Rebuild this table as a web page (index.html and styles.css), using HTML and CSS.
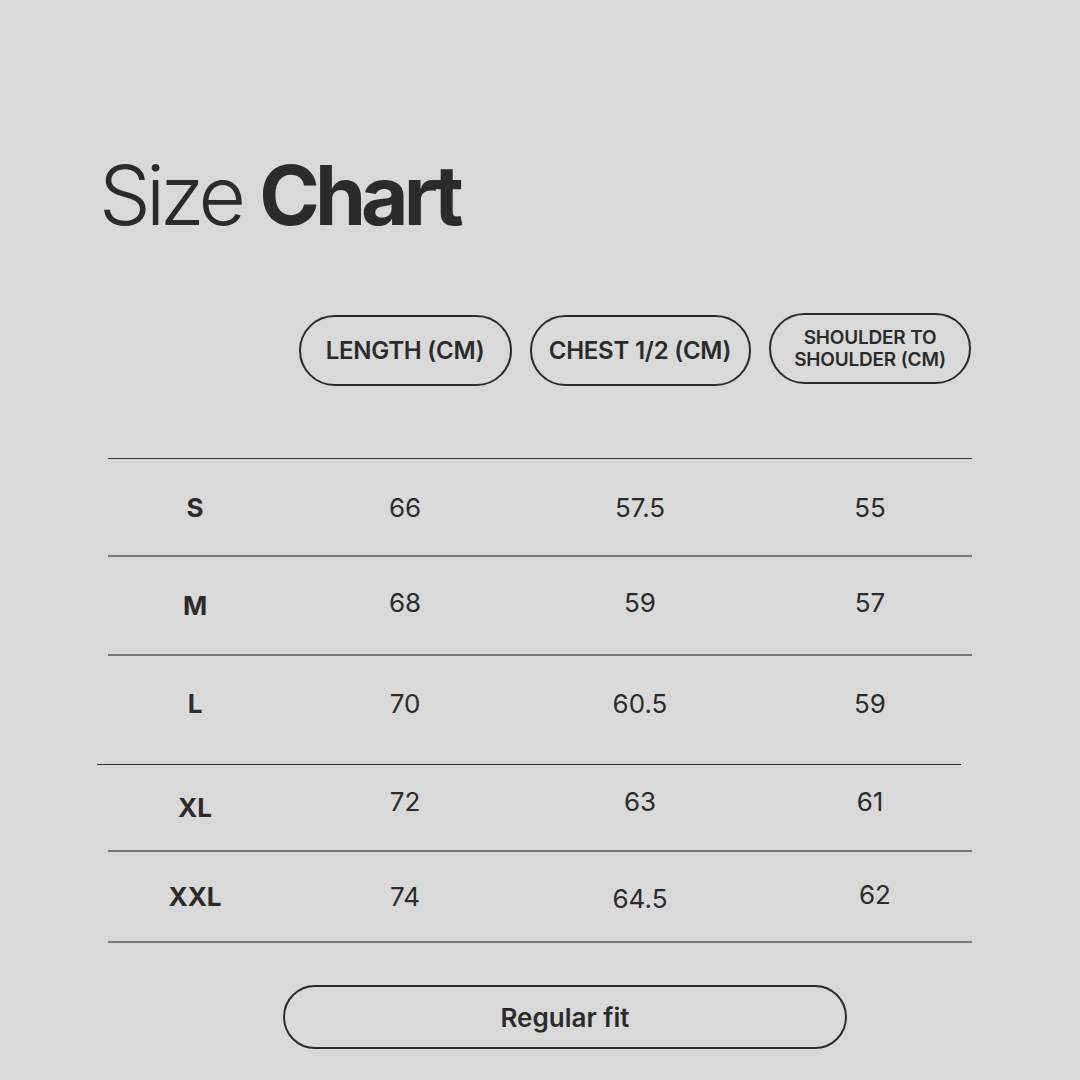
FILE: index.html
```html
<!DOCTYPE html>
<html lang="en">
<head>
<meta charset="utf-8">
<title>Size Chart</title>
<link rel="stylesheet" href="styles.css">
</head>
<body>
<main class="page">
  <h1 class="title"><span class="light">Size</span> <span class="bold">Chart</span></h1>

  <section class="chart">
    <div class="grid head">
      <div class="cell"></div>
      <div class="cell"><div class="pill p-length">LENGTH (CM)</div></div>
      <div class="cell"><div class="pill p-chest">CHEST 1/2 (CM)</div></div>
      <div class="cell c4"><div class="pill p-shoulder">SHOULDER TO<br>SHOULDER (CM)</div></div>
    </div>

    <div class="rule dark"></div>
    <div class="grid row r1">
      <div class="cell size">S</div>
      <div class="cell val">66</div>
      <div class="cell val">57.5</div>
      <div class="cell val c4">55</div>
    </div>
    <div class="rule grey"></div>
    <div class="grid row r2">
      <div class="cell size">M</div>
      <div class="cell val up3">68</div>
      <div class="cell val up3">59</div>
      <div class="cell val c4 up3">57</div>
    </div>
    <div class="rule grey"></div>
    <div class="grid row r3">
      <div class="cell size">L</div>
      <div class="cell val">70</div>
      <div class="cell val">60.5</div>
      <div class="cell val c4">59</div>
    </div>
    <div class="rule dark shift"></div>
    <div class="grid row r4">
      <div class="cell size">XL</div>
      <div class="cell val up6">72</div>
      <div class="cell val up6">63</div>
      <div class="cell val c4 up6">61</div>
    </div>
    <div class="rule grey"></div>
    <div class="grid row r5">
      <div class="cell size">XXL</div>
      <div class="cell val">74</div>
      <div class="cell val down2">64.5</div>
      <div class="cell val c4 nudge">62</div>
    </div>
    <div class="rule grey"></div>
  </section>

  <div class="fit-wrap">
    <div class="fit">Regular fit</div>
  </div>
</main>
</body>
</html>
```

FILE: styles.css
```css
* { box-sizing: border-box; margin: 0; padding: 0; }

html, body {
  width: 1080px;
  height: 1080px;
  background: #d9d9d9;
  overflow: hidden;
}

body {
  font-family: Inter, "Noto Sans", "Liberation Sans", sans-serif;
  color: #2b2b2b;
}

.page {
  padding-top: 146px;
}

.title {
  margin-left: 99px;
  font-size: 82px;
  line-height: 100px;
  letter-spacing: -0.06em;
  font-weight: 400;
  white-space: nowrap;
}

.title .light { font-weight: 300; }
.title .bold { font-weight: 700; }

.chart {
  margin-left: 108px;
  width: 864px;
  margin-top: 69px;
}

.grid {
  display: grid;
  grid-template-columns: 174px 246px 224px 220px;
  align-items: center;
}

.cell {
  display: flex;
  justify-content: center;
  align-items: center;
}

.c4 { padding-left: 16px; }

.head {
  height: 71px;
  margin-bottom: 72px;
}

.pill {
  height: 71px;
  border: 2px solid #2b2b2b;
  border-radius: 36px;
  display: flex;
  align-items: center;
  justify-content: center;
  text-align: center;
  font-weight: 600;
  font-size: 24px;
  letter-spacing: -0.01em;
  white-space: nowrap;
}

.p-length { width: 213px; }
.p-chest { width: 221px; }
.p-shoulder {
  width: 202px;
  font-size: 19px;
  line-height: 22px;
  margin-top: -4px;
}

.rule { width: 864px; }
.rule.dark { height: 1px; background: #333333; }
.rule.grey { height: 2px; background: #7a7a7a; }
.rule.shift { margin-left: -11px; }

.row { font-size: 26px; }
.r1 { height: 96px; }
.r2 { height: 97px; }
.r3 { height: 108px; padding-bottom: 14px; }
.r4 { height: 85px; }
.r5 { height: 89px; }

.size { font-weight: 700; }
.val { font-weight: 400; }

.up3 { margin-bottom: 6px; }
.up6 { margin-bottom: 12px; }
.down2 { margin-top: 4px; }
.nudge { padding-left: 26px; margin-bottom: 4px; }

.fit-wrap {
  margin-top: 42px;
  margin-left: 283px;
}

.fit {
  width: 564px;
  height: 64px;
  border: 2px solid #2b2b2b;
  border-radius: 32px;
  display: flex;
  align-items: center;
  justify-content: center;
  font-size: 26px;
  font-weight: 600;
}
```
